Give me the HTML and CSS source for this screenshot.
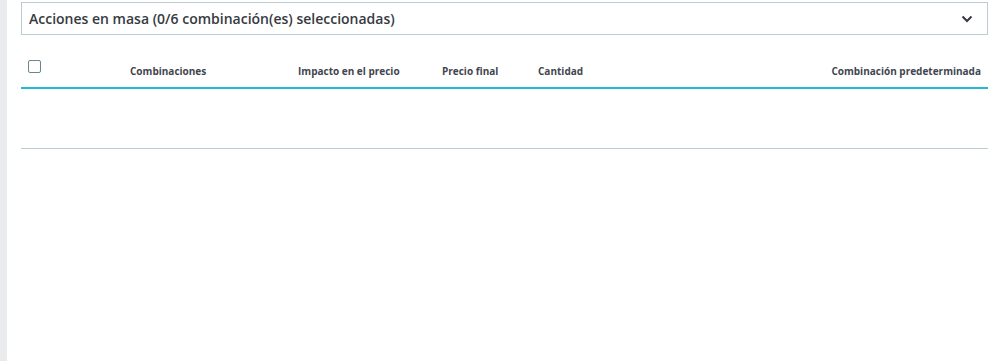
FILE: index.html
```html
<!DOCTYPE html>
<html>

<head>
	<title>Combinaciones</title>
	<link rel="stylesheet" href="styles.css">
</head>

<body>
	<div class="page">
		<div class="side"></div>
		<div class="content">
			<div class="bulk-actions">
				<span class="bulk-title">Acciones en masa (0/6 combinación(es) seleccionadas)</span>
				<svg class="chevron" width="12" height="8" viewBox="0 0 12 8">
					<path d="M1.5 1.5 L6 6 L10.5 1.5" fill="none" stroke="#363a41" stroke-width="2" />
				</svg>
			</div>
			<div class="combinations">
				<div class="table-head">
					<div class="col col-check"><span class="checkbox"></span></div>
					<div class="col col-name">Combinaciones</div>
					<div class="col col-impact">Impacto en el precio</div>
					<div class="col col-final">Precio final</div>
					<div class="col col-qty">Cantidad</div>
					<div class="col col-default">Combinación predeterminada</div>
				</div>
				<div class="table-body"></div>
			</div>
		</div>
	</div>
</body>

</html>
```

FILE: styles.css
```css
body {
	font-family: "Open Sans", Arial, sans-serif;
	margin: 0;
	padding: 0;
	background-color: #fff;
	color: #363a41;
}

.page {
	display: flex;
	height: 361px;
}

.side {
	width: 7px;
	background-color: #eaebec;
}

.content {
	flex: 1;
	padding: 2px 12px 0 14px;
}

.bulk-actions {
	display: flex;
	align-items: center;
	justify-content: space-between;
	height: 31px;
	padding: 0 14px 0 7px;
	border: 1px solid #bbcdd2;
	font-size: 14px;
	font-weight: 600;
}

.chevron {
	display: block;
}

.combinations {
	margin-top: 22px;
}

.table-head {
	display: flex;
	align-items: center;
	height: 28px;
	padding-bottom: 2px;
	border-bottom: 2px solid #25b9d7;
	font-size: 10px;
	font-weight: 700;
	color: #3f4650;
}

.col-check {
	width: 102px;
	padding-left: 7px;
	padding-top: 3px;
	align-self: flex-start;
}

.checkbox {
	display: block;
	width: 11px;
	height: 11px;
	border: 1px solid #6c868e;
	border-radius: 2px;
}

.col-name {
	width: 168px;
}

.col-impact {
	width: 144px;
}

.col-final {
	width: 96px;
}

.col-qty {
	flex: 1;
}

.col-default {
	padding-right: 7px;
}

.table-body {
	height: 59px;
	border-bottom: 1px solid #bbcdd2;
}
```
